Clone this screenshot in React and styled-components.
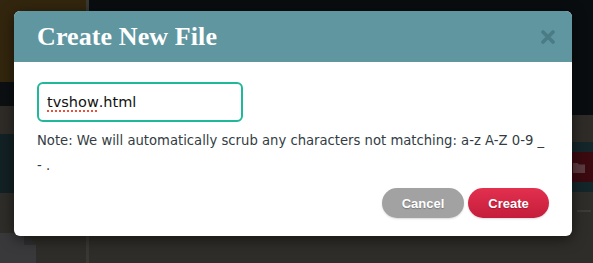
import styled, { createGlobalStyle } from "styled-components";

const GlobalStyle = createGlobalStyle`
  html, body {
    margin: 0;
    padding: 0;
    width: 593px;
    height: 263px;
    overflow: hidden;
    background: #2f2d29;
  }
  * { box-sizing: border-box; }
`;

const Page = styled.div`
  position: relative;
  display: grid;
  grid-template-columns: 86px 1fr;
  column-gap: 3px;
  width: 593px;
  height: 263px;
  background: #3a3833;
`;

const Column = styled.div`
  display: flex;
  flex-direction: column;
  background: #2f2d29;
`;

const Band = styled.div`
  flex: 0 0 ${(p) => p.h}px;
  background: ${(p) => p.color};
  display: flex;
  align-items: center;
  justify-content: flex-end;
  padding-right: 8px;
`;

const Fill = styled.div`
  flex: 1;
  display: flex;
  flex-direction: column;
  justify-content: space-between;
`;

const Rule = styled.div`
  align-self: flex-end;
  width: 14px;
  height: 2px;
  margin: 18px 2px 0 0;
  background: #3d3b37;
`;

const DocIcon = styled.svg`
  display: block;
  margin-top: auto;
`;

const Modal = styled.div`
  position: absolute;
  top: 11px;
  left: 14px;
  width: 558px;
  background: #fff;
  border-radius: 6px;
  box-shadow: 0 3px 14px rgba(0, 0, 0, 0.55);
  overflow: hidden;
`;

const Header = styled.div`
  display: flex;
  align-items: center;
  justify-content: space-between;
  height: 51px;
  padding: 0 17px 0 23px;
  background: #6096a0;
`;

const Title = styled.h2`
  margin: 0;
  font-family: "Liberation Serif", "DejaVu Serif", serif;
  font-weight: bold;
  font-size: 26px;
  color: #fff;
  letter-spacing: 0.1px;
`;

const Close = styled.button`
  border: 0;
  padding: 0;
  background: none;
  display: flex;
  cursor: pointer;
`;

const Body = styled.div`
  padding: 20px 23px 18px;
`;

const Field = styled.div`
  display: flex;
  align-items: center;
  width: 206px;
  height: 40px;
  padding: 0 8px;
  border: 2px solid #1fb99a;
  border-radius: 6px;
  font-family: "DejaVu Sans", sans-serif;
  font-size: 14.5px;
  color: #111;
`;

const Misspelled = styled.span`
  text-decoration: underline dotted #e5533f;
  text-decoration-thickness: 2px;
  text-underline-offset: 3px;
`;

const Note = styled.p`
  margin: 6px 0 0;
  font-family: "DejaVu Sans", sans-serif;
  font-size: 13.2px;
  line-height: 25px;
  color: #333c44;
`;

const Actions = styled.div`
  display: flex;
  justify-content: flex-end;
  gap: 4px;
  margin-top: 10px;
`;

const Button = styled.button`
  height: 30px;
  width: ${(p) => p.w}px;
  border: 0;
  border-radius: 15px;
  font-family: "Liberation Sans", Arial, sans-serif;
  font-weight: bold;
  font-size: 13px;
  color: #fff;
  text-shadow: 0 1px 1px rgba(0, 0, 0, 0.25);
  background: ${(p) =>
    p.primary
      ? "linear-gradient(#e3304f, #c41d3b)"
      : "#a2a2a2"};
  box-shadow: 0 1px 2px rgba(0, 0, 0, 0.15);
  cursor: pointer;
`;

export default function App() {
  return (
    <>
      <GlobalStyle />
      <Page>
        <Column>
          <Band h={82} color="#33260e" />
          <Band h={24} color="#0c1013" />
          <Band h={28} color="#2f2c28" />
          <Band h={59} color="#122124" />
          <Fill>
            <DocIcon width="36" height="30" viewBox="0 0 36 30">
              <path d="M0 0 H24 L36 12 V30 H0 Z" fill="#39393b" />
              <path d="M24 0 L36 12 H24 Z" fill="#2f2f31" />
            </DocIcon>
          </Fill>
        </Column>
        <Column>
          <Band h={115} color="#0a0d10" />
          <Band h={27} color="#2f2c28" />
          <Band h={10} color="#14262a" />
          <Band h={30} color="#3a0a10">
            <svg width="12" height="11" viewBox="0 0 12 11">
              <path d="M0 1 H4.5 L6 2.5 H12 V11 H0 Z" fill="#5a3a3e" />
            </svg>
          </Band>
          <Band h={10} color="#14262a" />
          <Fill>
            <Rule />
          </Fill>
        </Column>

        <Modal>
          <Header>
            <Title>Create New File</Title>
            <Close aria-label="Close">
              <svg width="14" height="14" viewBox="0 0 14 14">
                <path
                  d="M2 2 L12 12 M12 2 L2 12"
                  stroke="#4a7c85"
                  strokeWidth="3.6"
                  strokeLinecap="round"
                />
              </svg>
            </Close>
          </Header>
          <Body>
            <Field>
              <Misspelled>tvshow</Misspelled>.html
            </Field>
            <Note>
              Note: We will automatically scrub any characters not matching: a-z A-Z 0-9 _ - .
            </Note>
            <Actions>
              <Button w={82}>Cancel</Button>
              <Button w={81} primary>
                Create
              </Button>
            </Actions>
          </Body>
        </Modal>
      </Page>
    </>
  );
}
